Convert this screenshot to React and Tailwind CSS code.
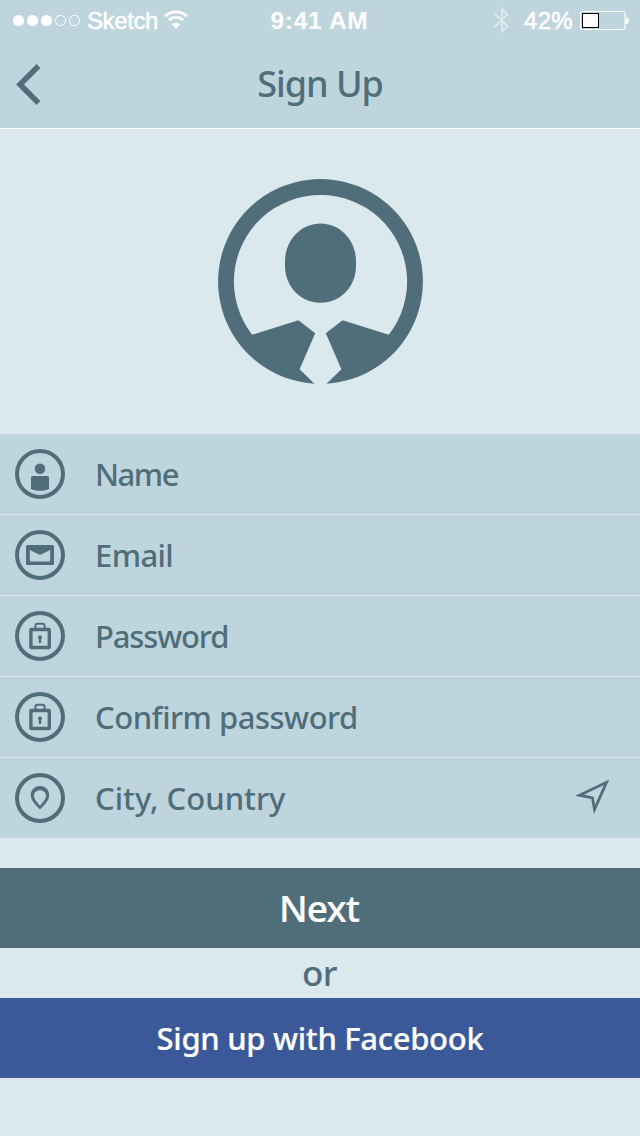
import React from "react";

function StatusBar() {
  return (
    <div className="flex h-10 items-center whitespace-nowrap font-['Liberation_Sans',sans-serif] text-2xl leading-[41px] text-white">
      <div className="flex flex-1 items-center">
        <svg className="ml-3 h-10 w-[70px]" viewBox="12 0 70 40" fill="#fff">
          <circle cx="18.5" cy="20.5" r="5.6" />
          <circle cx="32.5" cy="20.5" r="5.6" />
          <circle cx="46.5" cy="20.5" r="5.6" />
          <g fill="none" stroke="#fff">
            <circle cx="60.5" cy="20.5" r="5.1" />
            <circle cx="74.5" cy="20.5" r="5.1" />
          </g>
        </svg>
        <span className="ml-[5px] w-[76px] tracking-[-0.4px] [-webkit-text-stroke:0.5px_#fff]">Sketch</span>
        <svg className="h-10 w-[26px]" viewBox="163 0 26 40" fill="none" stroke="#fff" strokeWidth="2.7">
          <path d="M165 16.2a16 16 0 0 1 22 0" />
          <path d="M168.8 20.2a10.5 10.5 0 0 1 14.4 0" />
          <path d="M176 28.7l-4.3-4.2a6.1 6.1 0 0 1 8.6 0z" fill="#fff" stroke="none" />
        </svg>
      </div>
      <span className="mr-px text-[24.5px] font-bold tracking-[0.7px]">9:41 AM</span>
      <div className="flex flex-1 items-center justify-end">
        <svg className="h-10 w-5" viewBox="492 0 20 40" fill="none" stroke="#dfeaee" strokeWidth="1.8">
          <path d="M494.5 13.5l13 12.8-5.5 5V9l5.5 5.2-13 12.8" />
        </svg>
        <span className="ml-3 w-[55px] tracking-[0.3px] [-webkit-text-stroke:0.5px_#fff]">42%</span>
        <svg className="h-10 w-[61px]" viewBox="579 0 61 40">
          <rect x="580.5" y="11.5" width="44.5" height="18" rx="2" fill="none" stroke="#fff" strokeWidth="1.1" />
          <rect x="582.5" y="13.5" width="16" height="14" fill="#fff" stroke="#000" />
          <path d="M626 17c4 1.2 4 6 0 7.2z" fill="#fff" />
        </svg>
      </div>
    </div>
  );
}

function Avatar() {
  return (
    <svg className="h-[206px] w-[206px]" viewBox="8 9 206 206" fill="#506d7a">
      <path
        fillRule="evenodd"
        d="M104.500 213.700A102.400 102.400 0 1 1 116.500 213.700L131.400 199.200 115.800 163.300 132.600 150.200 178.800 164.800A86.600 86.600 0 1 0 42.200 164.800L88.400 150.200 105.200 163.300 89.600 199.200Z"
      />
      <path d="M75 91.500C75 70 91 53.500 110.500 53.500S146 70 146 91.500V96C146 117 130 132.800 110.500 132.800S75 117 75 96Z" />
    </svg>
  );
}

const glyphs = {
  person: (
    <g fill="#506d7a">
      <circle cx="25" cy="19.8" r="5.3" />
      <path d="M17.5 27h15a1.500 1.500 0 0 1 1.500 1.500V40c-5 2.400-13 2.400-18 0V28.500a1.500 1.500 0 0 1 1.500-1.500z" />
    </g>
  ),
  mail: (
    <path
      fill="#506d7a"
      fillRule="evenodd"
      d="M12.500 15h25a1.500 1.500 0 0 1 1.500 1.500v17a1.500 1.500 0 0 1-1.500 1.500h-25a1.500 1.500 0 0 1-1.500-1.500v-17a1.500 1.500 0 0 1 1.500-1.500zM14.800 20v10.500a1 1 0 0 0 1 1h18.400a1 1 0 0 0 1-1V20L25 25z"
    />
  ),
  lock: (
    <g>
      <path d="M20.500 17v-2.500q0-1.800 1.800-1.800h5.400q1.800 0 1.800 1.800V17" fill="none" stroke="#506d7a" strokeWidth="2" />
      <rect x="15.9" y="18.5" width="18.4" height="18" rx="0.5" fill="none" stroke="#506d7a" strokeWidth="3.4" />
      <path d="M23.800 32v-4.100a2 2 0 1 1 2.400 0V32z" fill="#506d7a" />
    </g>
  ),
  pin: (
    <path
      fill="#506d7a"
      fillRule="evenodd"
      d="M25 13c-5.300 0-9.200 4-9.200 9 0 5.500 4.500 9.500 9.200 14.500 4.700-5 9.200-9 9.200-14.500 0-5-3.900-9-9.200-9zM25 17.200c3.600 0 6 2.300 6 5.500 0 3.500-3.300 6.800-6 10-2.700-3.200-6-6.500-6-10 0-3.200 2.400-5.500 6-5.500z"
    />
  ),
};

const fields = [
  { label: "Name", icon: "person", spacing: "tracking-[-1.5px]" },
  { label: "Email", icon: "mail", spacing: "tracking-[-0.6px]" },
  { label: "Password", icon: "lock", spacing: "tracking-[-1.15px]" },
  { label: "Confirm password", icon: "lock", spacing: "tracking-[-0.5px]" },
  { label: "City, Country", icon: "pin", spacing: "tracking-[0px]", locate: true },
];

function Field({ label, icon, spacing, locate }) {
  return (
    <div className="flex h-20 items-center bg-[#bfd5dd] pl-[15px] pr-[28px]">
      <svg className="size-[50px]" viewBox="0 0 50 50">
        <circle cx="25" cy="25" r="23" fill="none" stroke="#506d7a" strokeWidth="4" />
        {glyphs[icon]}
      </svg>
      <span className={"ml-[30px] flex-1 whitespace-nowrap text-[31px] leading-[80px] " + spacing}>{label}</span>
      {locate && (
        <svg className="mb-[3px] h-[36px] w-[36px]" viewBox="0 0 36 36" fill="none" stroke="#506d7a" strokeWidth="2.8">
          <path d="M3.500 16.200L30.500 3.300 18.500 30.500 16.500 19Z" />
        </svg>
      )}
    </div>
  );
}

export default function App() {
  return (
    <main className="flex h-[1136px] w-[640px] flex-col overflow-hidden bg-[#dbe8ee] font-['Noto_Sans',sans-serif] font-medium text-[#506d7a]">
      <header className="h-[129px] border-b border-white bg-[#bfd5dd]">
        <StatusBar />
        <div className="grid h-[88px] grid-cols-[80px_1fr_80px] items-center">
          <svg className="h-12 w-12" viewBox="0 0 48 48" fill="none" stroke="#506d7a" strokeWidth="5.5">
            <path d="M38.500 6L20 24.500 38.500 43" />
          </svg>
          <h1 className="text-center text-[36px] font-medium leading-[88px] tracking-[-1px]">Sign Up</h1>
        </div>
      </header>
      <section className="flex h-[305px] items-center justify-center pl-[2px]">
        <Avatar />
      </section>
      <section className="flex flex-col gap-px">
        {fields.map((field) => (
          <Field key={field.label} {...field} />
        ))}
      </section>
      <button className="mt-[30px] h-20 bg-[#506d7a] pr-[2px] text-[37px] leading-[80px] tracking-[-0.9px] text-white [-webkit-text-stroke:0.2px_currentColor]">Next</button>
      <p className="h-[50px] pr-px text-center text-[35px] leading-[49px] tracking-[-0.5px]">or</p>
      <button className="h-20 bg-[#3b5998] text-[31px] leading-[80px] tracking-[-0.3px] text-white [-webkit-text-stroke:0.2px_currentColor]">Sign up with Facebook</button>
    </main>
  );
}
